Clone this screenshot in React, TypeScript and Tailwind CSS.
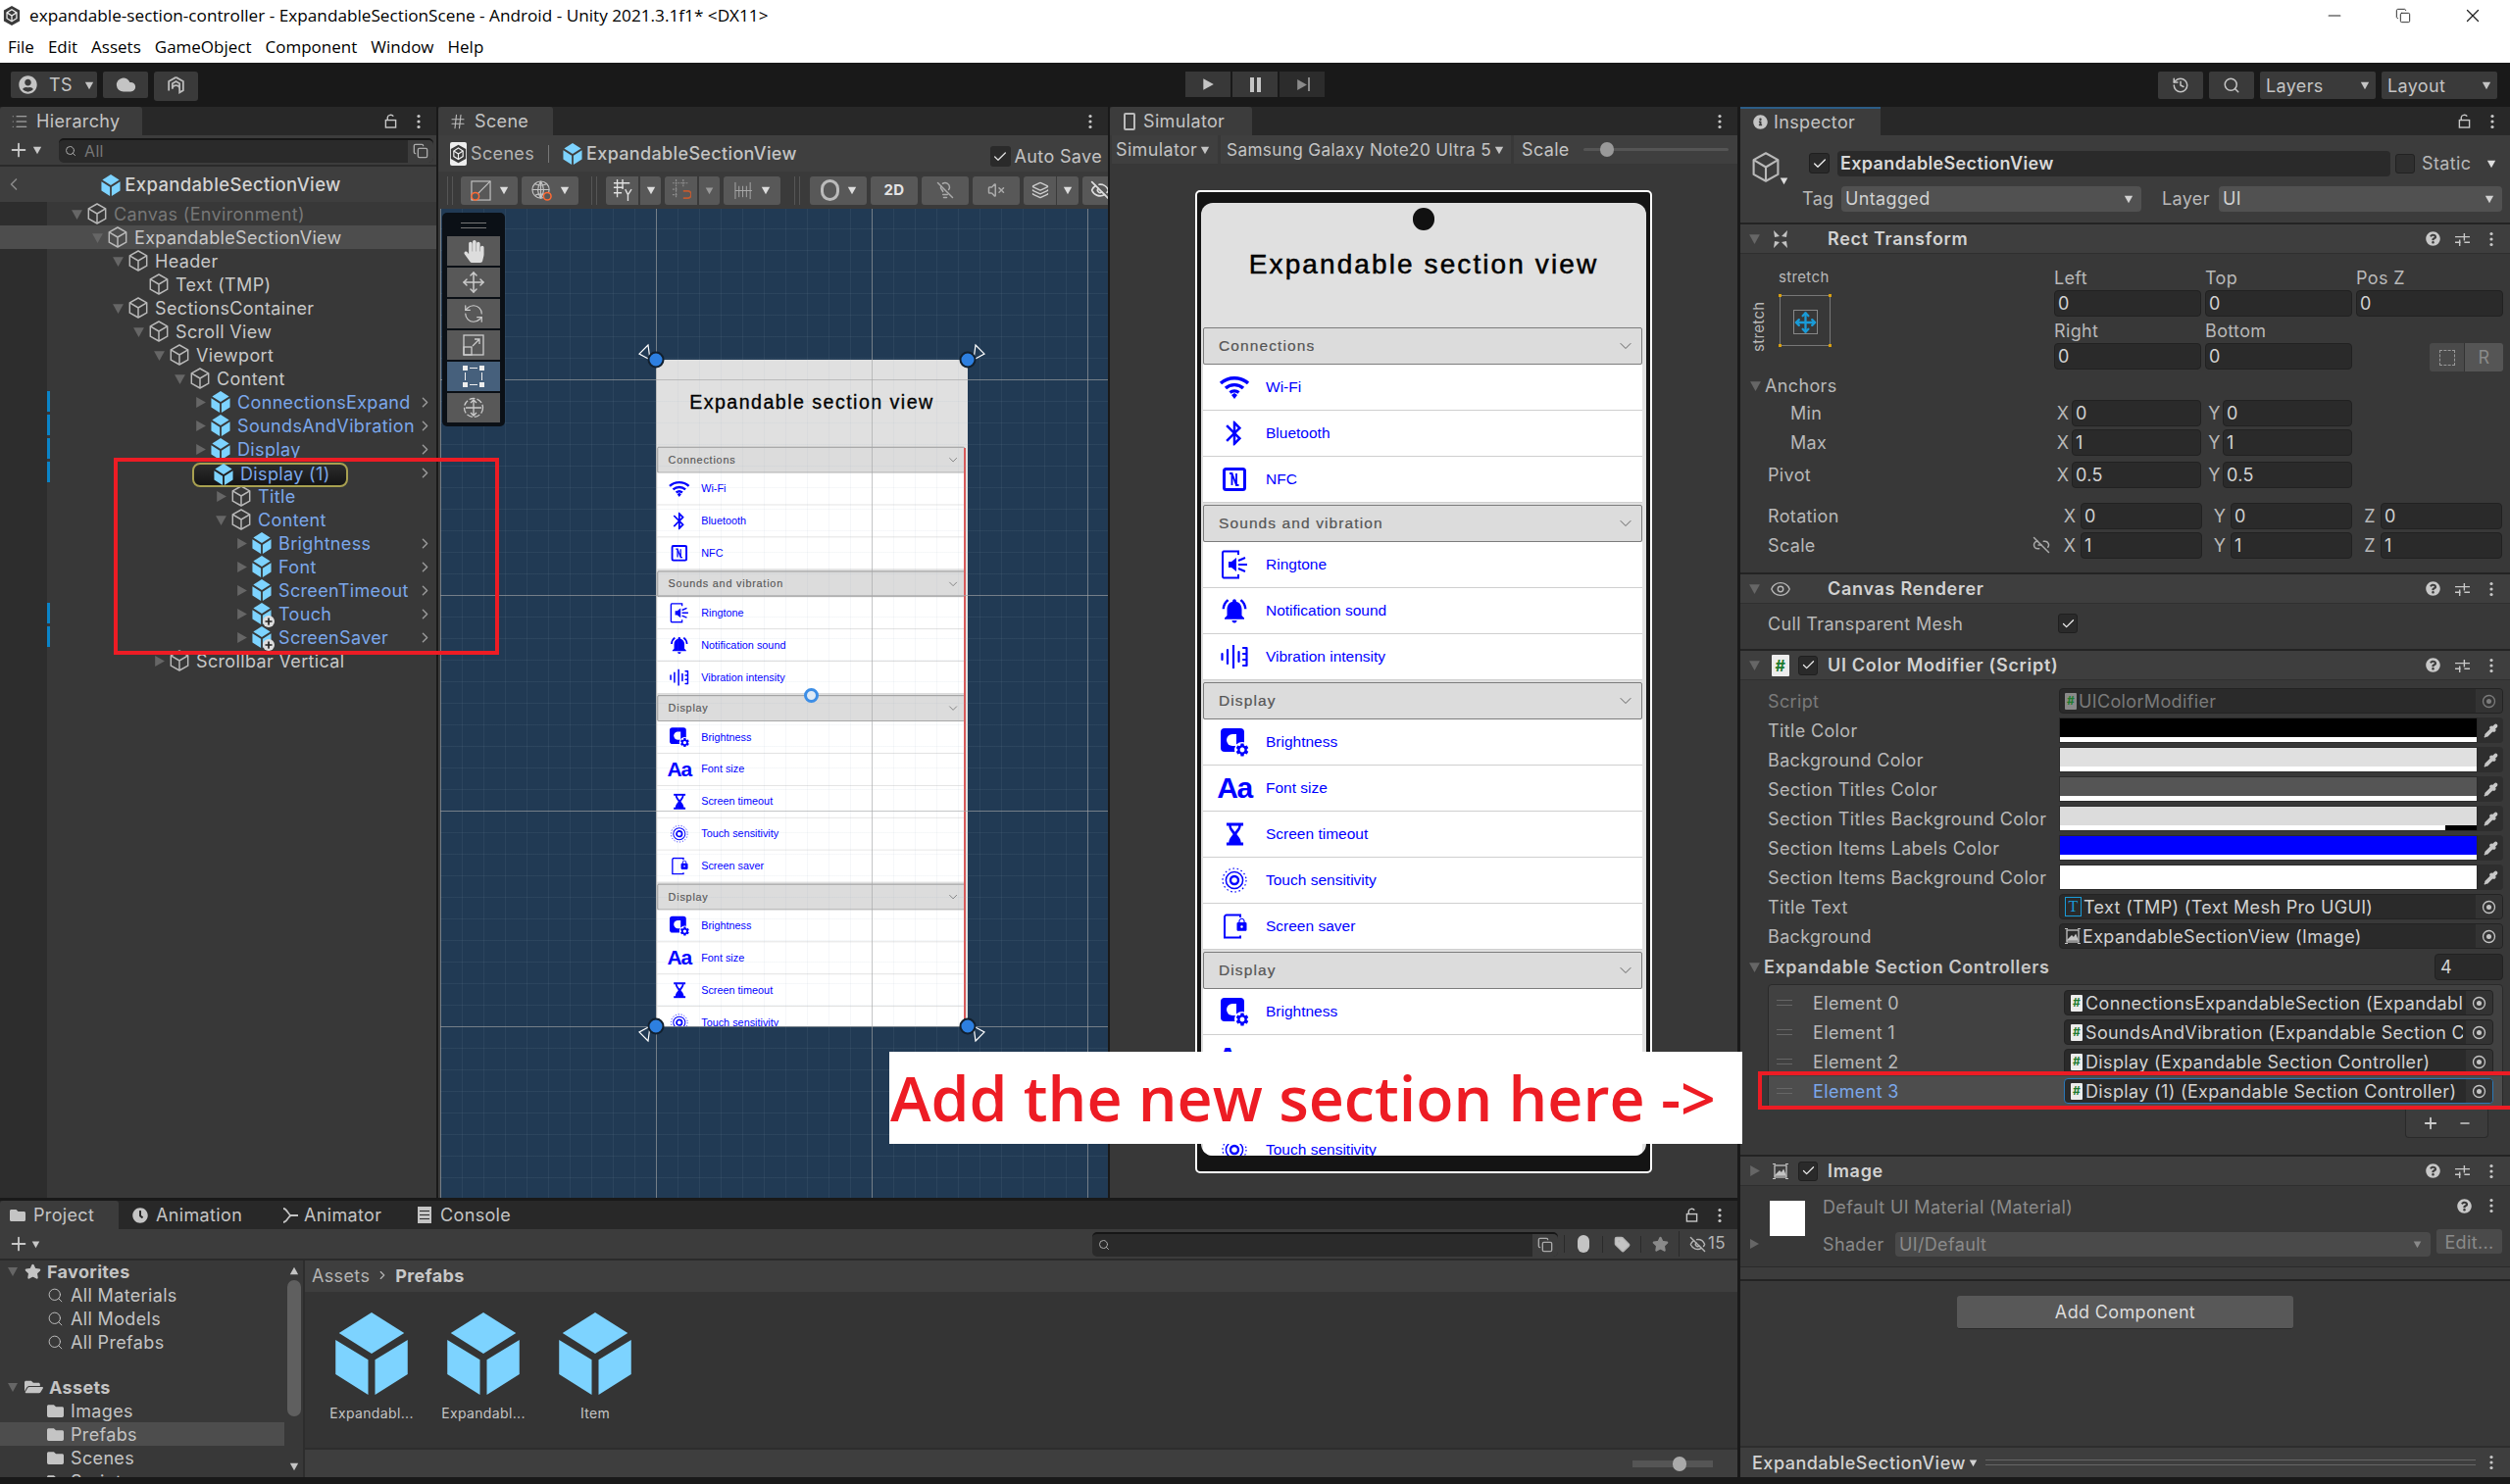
import React from "react";
import {
  Check, Cloud, Copy, EyeOff, History, LightbulbOff, List, Minus, Move, Pipette, Plus, RefreshCcw, Search, Star, Tag, VolumeX, X, Eye, Layers, ChevronRight, ChevronDown, Link2Off, Hash,
} from "lucide-react";
import { FaQuestionCircle, FaUserCircle, FaClock, FaFolder, FaFolderOpen, FaInfoCircle, FaHandPaper } from "react-icons/fa";
import { MdBluetooth, MdNotificationsActive, MdSettings, MdLock } from "react-icons/md";

const Tri = ({ dir = "down", className = "" }: { dir?: "down" | "right"; className?: string }) => (
  <svg viewBox="0 0 12 12" className={className} fill="currentColor">
    {dir === "down" ? <path d="M1 2h10L6 11z" /> : <path d="M2 1v10l9-5z" />}
  </svg>
);

const OutlineCube = ({ className = "w-5 h-[22px]" }: { className?: string }) => (
  <svg viewBox="0.5 0.5 23 25" className={"shrink-0 " + className} fill="none" stroke="#b9b9b9" strokeWidth="1.7" strokeLinejoin="round">
    <path d="M12 1.500 22 7v12l-10 5.500L2 19V7z" />
    <path d="m2 7 10 6 10-6M12 13v11.500" />
  </svg>
);

const PrefabCube = ({ className = "w-5 h-[22px]", badge = false }: { className?: string; badge?: boolean }) => (
  <span className={"relative inline-block shrink-0 " + className}>
    <svg viewBox="1 1 22 24" className="w-full h-full" fill="#7dd3ff">
      <path d="M12 1 21.500 7 12 13 2.500 7z" />
      <path d="M1.500 9 11 14.800V25L1.500 19zM22.500 9 13 14.800V25l9.500-6z" />
    </svg>
    {badge && (
      <span className="absolute -right-[3px] -bottom-[3px] w-3 h-3 rounded-full bg-[#ddd] flex items-center justify-center">
        <Plus className="w-[10px] h-[10px] text-[#222]" strokeWidth={4} />
      </span>
    )}
  </span>
);

const Kebab = ({ className = "" }: { className?: string }) => (
  <svg viewBox="0 0 4 16" className={"w-1 h-4 " + className} fill="#c8c8c8">
    <circle cx="2" cy="2.500" r="1.600" />
    <circle cx="2" cy="8" r="1.600" />
    <circle cx="2" cy="13.500" r="1.600" />
  </svg>
);

const LockIcon = () => (
  <svg viewBox="0 0 14 16" className="w-[13px] h-[15px]" fill="none" stroke="#c8c8c8" strokeWidth="1.500">
    <rect x="1.500" y="7" width="11" height="8" />
    <path d="M3.500 7V4a3.500 3 0 0 1 6.500-1.200" />
  </svg>
);

const PresetIcon = () => (
  <svg viewBox="0 0 16 16" className="w-[15px] h-[15px]" stroke="#c8c8c8" strokeWidth="1.500" fill="none">
    <path d="M0 6h16M10 2v8M0 12h6M10 12h6M5 9v7" />
  </svg>
);

const Target = ({ dim = false }: { dim?: boolean }) => (
  <svg viewBox="0 0 16 16" className={"w-[15px] h-[15px] " + (dim ? "opacity-50" : "")} fill="none" stroke="#c4c4c4" strokeWidth="1.400">
    <circle cx="8" cy="8" r="6.400" />
    <circle cx="8" cy="8" r="2" fill="#c4c4c4" />
  </svg>
);

const ScriptIcon = ({ dim = false }: { dim?: boolean }) => (
  <span className={"w-[12px] h-[17px] shrink-0 rounded-[1px] flex items-center justify-center text-[12px] leading-none font-bold text-[#1d7a2e] " + (dim ? "bg-[#8a8a8a]" : "bg-[#ececec]")}>
    #
  </span>
);

const ImageGlyph = () => (
  <svg viewBox="0 0 16 16" className="w-[16px] h-[16px] shrink-0" fill="none" stroke="#c4c4c4" strokeWidth="1.300">
    <rect x="2" y="2" width="12" height="12" />
    <path d="m3 12 4-4 2 2 2-3 2 5z" fill="#c4c4c4" />
    <path d="M0 0h3M13 0h3M0 16h3M13 16h3" strokeWidth="2" />
  </svg>
);

const UnityLogo = () => (
  <svg viewBox="0 0 20 22" className="w-[18px] h-[20px]">
    <path d="M10 0 19 5v12l-9 5-9-5V5z" fill="#3a3a3a" />
    <path d="M10 4 15.500 7.500V14L10 17.500 4.500 14V7.500z" fill="none" stroke="#eee" strokeWidth="1.400" />
    <path d="M4.500 7.500 10 11l5.500-3.500M10 11v6.500" fill="none" stroke="#eee" strokeWidth="1.400" />
  </svg>
);

/* ---------- phone preview ---------- */

const WifiGlyph = () => (
  <svg viewBox="0 0 32 24" className="w-[32px] h-[24px]" fill="none" stroke="#00f" strokeWidth="3.400">
    <path d="M2 8c8-7 20-7 28 0M7 13c5-4.500 13-4.500 18 0" />
    <path d="M11.500 17.500c2.500-2 6.500-2 9 0" />
    <path d="m13 20 3-2 3 2-3 4z" fill="#00f" stroke="none" />
  </svg>
);

const NfcGlyph = () => (
  <svg viewBox="0 0 24 24" className="w-[24px] h-[24px]" fill="none" stroke="#00f">
    <rect x="1.500" y="1.500" width="21" height="21" rx="2" strokeWidth="3" />
    <path d="M7 6h2.500v12M16.500 18H14V6M9.500 6 14 18" strokeWidth="1.800" />
  </svg>
);

const RingtoneGlyph = () => (
  <svg viewBox="0 0 28 30" className="w-[28px] h-[30px]" fill="none" stroke="#00f" strokeWidth="2">
    <path d="M18 5V1.500H3a1.500 1.500 0 0 0-1 1.500v24a1.500 1.500 0 0 0 1 1.500h15V25" />
    <path d="M8 12h3l5-4v14l-5-4H8z" fill="#00f" stroke="none" />
    <path d="m18 11 7-3M18 15h9M18 19l7 3" />
  </svg>
);

const VibrationGlyph = () => (
  <svg viewBox="0 0 28 24" className="w-[28px] h-[24px]" stroke="#00f" strokeWidth="2.200" strokeLinecap="round">
    <path d="M1.500 9v6M7 5v14M13 0v24M18.500 7v10M26.500 3v18M23 3h3.500M23 9h3.500M23 15h3.500M23 21h3.500" />
  </svg>
);

const BrightnessGlyph = () => (
  <span className="relative w-[28px] h-[28px] block">
    <span className="absolute left-0 top-0 w-[24px] h-[24px] rounded-[4px] bg-[#00f]" />
    <span className="absolute left-[6px] top-[6px] w-[10px] h-[12px] rounded-l-full bg-white" />
    <MdSettings className="absolute -right-[2px] -bottom-[2px] w-[16px] h-[16px] text-[#00f] bg-white rounded-full" />
  </span>
);

const HourglassGlyph = () => (
  <svg viewBox="0 0 20 24" className="w-[19px] h-[24px]" fill="#00f">
    <path d="M1 0h18v3h-2.500c0 4-3 6.500-4.500 9 1.500 2.500 4.500 5 4.500 9H19v3H1v-3h2.500c0-4 3-6.500 4.500-9-1.500-2.500-4.500-5-4.500-9H1z" />
    <path d="M6 3h8c0 2-2 4-4 6.500C8 7 6 5 6 3z" fill="#fff" />
  </svg>
);

const TouchGlyph = () => (
  <svg viewBox="0 0 26 26" className="w-[26px] h-[26px]" fill="none" stroke="#00f">
    <circle cx="13" cy="13" r="12" strokeWidth="1.200" strokeDasharray="1.600 2.600" />
    <circle cx="13" cy="13" r="8.600" strokeWidth="1.500" />
    <circle cx="13" cy="13" r="4" strokeWidth="2.400" />
  </svg>
);

const SaverGlyph = () => (
  <span className="relative w-[22px] h-[26px] block">
    <svg viewBox="0 0 22 26" className="w-full h-full" fill="none" stroke="#00f" strokeWidth="2">
      <path d="M17 4V1.500H3A2 2 0 0 0 1 3.500v21h16v-2" />
    </svg>
    <MdLock className="absolute right-[-4px] top-[4px] w-[15px] h-[15px] text-[#00f]" />
  </span>
);

const sections = [
  {
    title: "Connections",
    items: [
      { label: "Wi-Fi", icon: <WifiGlyph /> },
      { label: "Bluetooth", icon: <MdBluetooth className="w-[30px] h-[30px] text-[#00f]" /> },
      { label: "NFC", icon: <NfcGlyph /> },
    ],
  },
  {
    title: "Sounds and vibration",
    items: [
      { label: "Ringtone", icon: <RingtoneGlyph /> },
      { label: "Notification sound", icon: <MdNotificationsActive className="w-[30px] h-[30px] text-[#00f]" /> },
      { label: "Vibration intensity", icon: <VibrationGlyph /> },
    ],
  },
];

const displayItems = [
  { label: "Brightness", icon: <BrightnessGlyph /> },
  { label: "Font size", icon: <span className="text-[30px] leading-none font-bold text-[#00f] tracking-[-1.500px]">Aa</span> },
  { label: "Screen timeout", icon: <HourglassGlyph /> },
  { label: "Touch sensitivity", icon: <TouchGlyph /> },
  { label: "Screen saver", icon: <SaverGlyph /> },
];

const allSections = [...sections, { title: "Display", items: displayItems }, { title: "Display", items: displayItems }];

const PhoneContent = () => (
  <div className="w-[454px] h-[972px] bg-[#e0e0e0] overflow-hidden tracking-normal font-['Liberation_Sans',sans-serif]">
    <div className="h-[127px] flex items-center justify-center pb-[2px] text-[28px] tracking-[2.1px] text-black [-webkit-text-stroke:0.5px_black]">
      Expandable section view
    </div>
    <div className="pl-[2px] pr-[4px] flex flex-col gap-[2px]">
      {allSections.map((s, i) => (
        <div key={i}>
          <div className="h-[38px] bg-[#dcdcdc] border border-[#7c7c7c] rounded-[2px] flex items-center justify-between pl-[15px] pr-[6px]">
            <span className="text-[15.5px] tracking-[1.1px] text-[#555] [-webkit-text-stroke:0.2px_#555]">{s.title}</span>
            <ChevronDown className="w-[20px] h-[20px] text-[#555]" strokeWidth={1.1} />
          </div>
          {s.items.map((it) => (
            <div key={it.label} className="h-[47px] bg-white border-b border-[#cfcfcf] flex items-center">
              <span className="w-[64px] flex justify-center shrink-0">{it.icon}</span>
              <span className="text-[15.5px] text-[#00f]">{it.label}</span>
            </div>
          ))}
        </div>
      ))}
    </div>
  </div>
);

/* ---------- shared panel bits ---------- */

const TabBar = ({ icon, label, width, lock = true }: { icon: React.ReactNode; label: string; width: string; lock?: boolean }) => (
  <div className="h-[29px] bg-[#282828] flex items-center justify-between pr-[16px]">
    <div className={"h-full bg-[#3c3c3c] rounded-t-[3px] flex items-center gap-[8px] pl-[11px] " + width}>
      {icon}
      <span className="text-[18px]">{label}</span>
    </div>
    <div className="flex items-center gap-[20px]">
      {lock && <LockIcon />}
      <Kebab />
    </div>
  </div>
);

const ToolBtn = ({ className = "", children }: { className?: string; children: React.ReactNode }) => (
  <div className={"h-[29px] bg-[#585858] rounded-[3px] flex items-center justify-center gap-[8px] shrink-0 " + className}>{children}</div>
);

const Grip = ({ className = "" }: { className?: string }) => (
  <div className={"w-[6px] h-[29px] border-x border-[#555] shrink-0 " + className} />
);

/* ---------- hierarchy ---------- */

type Node = { name: string; depth: number; arrow?: "down" | "right"; kind?: "cube" | "prefab" | "added"; blue?: boolean; chev?: boolean; mark?: boolean; dim?: boolean; sel?: boolean };

const tree: Node[] = [
  { name: "Canvas (Environment)", depth: 0, arrow: "down", dim: true },
  { name: "ExpandableSectionView", depth: 1, arrow: "down", sel: true },
  { name: "Header", depth: 2, arrow: "down" },
  { name: "Text (TMP)", depth: 3 },
  { name: "SectionsContainer", depth: 2, arrow: "down" },
  { name: "Scroll View", depth: 3, arrow: "down" },
  { name: "Viewport", depth: 4, arrow: "down" },
  { name: "Content", depth: 5, arrow: "down" },
  { name: "ConnectionsExpand", depth: 6, arrow: "right", kind: "prefab", blue: true, chev: true, mark: true },
  { name: "SoundsAndVibration", depth: 6, arrow: "right", kind: "prefab", blue: true, chev: true, mark: true },
  { name: "Display", depth: 6, arrow: "right", kind: "prefab", blue: true, chev: true, mark: true },
  { name: "", depth: 6, kind: "cube", chev: true, mark: true },
  { name: "Title", depth: 7, arrow: "right", blue: true },
  { name: "Content", depth: 7, arrow: "down", blue: true },
  { name: "Brightness", depth: 8, arrow: "right", kind: "prefab", blue: true, chev: true },
  { name: "Font", depth: 8, arrow: "right", kind: "prefab", blue: true, chev: true },
  { name: "ScreenTimeout", depth: 8, arrow: "right", kind: "prefab", blue: true, chev: true },
  { name: "Touch", depth: 8, arrow: "right", kind: "added", blue: true, chev: true, mark: true },
  { name: "ScreenSaver", depth: 8, arrow: "right", kind: "added", blue: true, chev: true, mark: true },
  { name: "Scrollbar Vertical", depth: 4, arrow: "right" },
];

const TreeRow = ({ n }: { n: Node }) => (
  <div className={"relative h-6 flex items-center text-[18px] " + (n.sel ? "bg-[#4d4d4d]" : "")}>
    {n.mark && <span className="absolute left-[48px] top-[1px] w-[3px] h-[21px] bg-[#0a84c8]" />}
    {n.name && (
      <div className="flex items-center" style={{ marginLeft: 72 + 21 * n.depth }}>
        <span className="w-[13px] shrink-0 mr-[4px]">{n.arrow && <Tri dir={n.arrow} className="w-[13px] h-[13px] text-[#666]" />}</span>
        {n.kind === "prefab" || n.kind === "added" ? <PrefabCube badge={n.kind === "added"} /> : <OutlineCube />}
        <span className={"ml-[7px] whitespace-nowrap " + (n.dim ? "text-[#777]" : n.blue ? "text-[#7ba7ea]" : "text-[#c8c8c8]")}>{n.name}</span>
      </div>
    )}
    {n.chev && <ChevronRight className="absolute left-[425px] top-[4px] w-[17px] h-[17px] text-[#9a9a9a]" strokeWidth={2} />}
  </div>
);

const Hierarchy = () => (
  <section className="w-[445px] shrink-0 bg-[#383838] flex flex-col">
    <TabBar width="w-[145px]" label="Hierarchy" icon={<List className="w-[18px] h-[18px] text-[#bbb]" strokeWidth={1.5} />} />
    <div className="h-[32px] bg-[#3c3c3c] border-b-2 border-[#2a2a2a] flex items-center pr-[3px]">
      <Plus className="w-[22px] h-[22px] ml-[8px] text-[#c8c8c8]" strokeWidth={2} />
      <Tri className="w-[10px] h-[10px] ml-[3px] text-[#c8c8c8]" />
      <div className="ml-[17px] flex-1 h-[25px] bg-[#2a2a2a] border-t-2 border-[#161616] rounded-[5px] flex items-center pl-[6px] gap-[8px]">
        <Search className="w-[12px] h-[12px] text-[#aaa]" />
        <span className="text-[16px] text-[#777]">All</span>
        <span className="ml-auto w-[26px] h-full bg-[#3c3c3c] flex items-center justify-center rounded-r-[5px]">
          <Copy className="w-[16px] h-[16px] text-[#aaa]" />
        </span>
      </div>
    </div>
    <div className="h-[36px] bg-[#3e3e3e] relative flex items-center justify-center pl-[6px] pt-[2px] gap-[4px] text-[18.5px] font-medium text-[#d2d2d2]">
      <ChevronRight className="absolute left-[4px] top-[8px] w-[20px] h-[20px] rotate-180 text-[#888]" />
      <PrefabCube />
      ExpandableSectionView
    </div>
    <div className="relative flex-1">
      <div className="absolute left-0 top-0 bottom-0 w-[48px] bg-[#2d2d2d]" />
      <div className="relative">
        {tree.map((n, i) => (
          <TreeRow key={i} n={n} />
        ))}
      </div>
      {/* ping highlight round Display (1) */}
      <div className="absolute left-[196px] top-[266px] w-[159px] h-[25px] rounded-[8px] border-2 border-[#a8a050] bg-gradient-to-b from-[#2c2c2c] to-[#151515] flex items-center pl-[20px] pb-[2px] gap-[7px] text-[18px] text-[#7ba7ea] whitespace-nowrap">
        <PrefabCube />
        Display (1)
      </div>
    </div>
  </section>
);

/* ---------- scene ---------- */

const Handle = ({ className, flip = false }: { className: string; flip?: boolean }) => (
  <svg viewBox="0 0 40 40" className={"absolute w-[40px] h-[40px] " + className} style={flip ? { transform: "scaleX(-1)" } : undefined}>
    <path d="M12 5 3 14l11 6z" fill="none" stroke="#fff" strokeWidth="1.200" />
    <circle cx="20" cy="20" r="7.500" fill="#2d7fe0" stroke="#12202e" strokeWidth="2" />
  </svg>
);

const SideTool = ({ active = false, children }: { active?: boolean; children: React.ReactNode }) => (
  <div className={"h-[30px] w-[54px] flex items-center justify-center " + (active ? "bg-[#46607c]" : "bg-[#585858]")}>{children}</div>
);

const Scene = () => (
  <section className="w-[683px] shrink-0 flex flex-col bg-[#3c3c3c]">
    <TabBar width="w-[117px]" label="Scene" lock={false} icon={<Hash className="w-[18px] h-[18px] text-[#bbb]" strokeWidth={1.5} />} />
    <div className="h-[37px] bg-[#3f3f3f] flex items-center pl-[12px] pr-[6px] text-[18px] text-[#c4c4c4]">
      <span className="w-[17px] h-[24px] bg-[#eee] rounded-[2px] flex items-center justify-center mr-[4px]"><UnityLogo /></span>
      <span className="text-[#b4b4b4]">Scenes</span>
      <span className="w-px h-[18px] bg-[#777] mx-[14px]" />
      <PrefabCube />
      <span className="ml-[4px] font-medium">ExpandableSectionView</span>
      <span className="ml-auto w-[21px] h-[21px] bg-[#2a2a2a] rounded-[3px] flex items-center justify-center mt-[6px]">
        <Check className="w-[16px] h-[16px] text-[#ddd]" />
      </span>
      <span className="ml-[4px] mt-[6px] text-[18px]">Auto Save</span>
    </div>
    <div className="h-[38px] bg-[#3a3a3a] flex items-center pl-[9px] overflow-hidden">
      <Grip />
      <ToolBtn className="w-[58px] ml-[8px]">
        <svg viewBox="0 0 22 22" className="w-[21px] h-[21px]" fill="none" stroke="#c4c4c4" strokeWidth="1.200"><rect x="1" y="1" width="20" height="20" /><path d="M1 21 21 1" /><circle cx="5" cy="17" r="4" stroke="#ff6a33" strokeWidth="1.600" fill="#585858" /></svg>
        <Tri className="w-[10px] h-[10px] text-[#ddd]" />
      </ToolBtn>
      <ToolBtn className="w-[58px] ml-[4px]">
        <svg viewBox="0 0 22 22" className="w-[21px] h-[21px]" fill="none" stroke="#c4c4c4" strokeWidth="1.200"><circle cx="10" cy="10" r="9" /><path d="M1 10h18M10 1v18M4 4q6 3 12 0M4 16q6-3 12 0M10 1q-6 9 0 18M10 1q6 9 0 18" /><circle cx="17" cy="17" r="4" stroke="#ff6a33" strokeWidth="1.600" fill="#585858" /></svg>
        <Tri className="w-[10px] h-[10px] text-[#ddd]" />
      </ToolBtn>
      <Grip className="ml-[13px]" />
      <ToolBtn className="w-[33px] ml-[9px] bg-[#46607c] rounded-r-none">
        <svg viewBox="0 0 22 26" className="w-[20px] h-[24px]" fill="none" stroke="#e0e0e0" strokeWidth="1.500"><path d="M5 1v20M11 1v11M1 5h18M1 10h11M1 16h9M14 12l3 6 4-6M17 18v7" /></svg>
      </ToolBtn>
      <ToolBtn className="w-[21px] ml-[2px] bg-[#46607c] rounded-l-none"><Tri className="w-[10px] h-[10px] text-[#ddd]" /></ToolBtn>
      <ToolBtn className="w-[33px] ml-[4px] rounded-r-none">
        <svg viewBox="0 0 22 26" className="w-[20px] h-[24px]" fill="none" stroke="#8f8f8f" strokeWidth="1.300"><path d="M5 1v20M13 1v8M1 5h18M1 12h6M1 18h6" strokeDasharray="2 1" /><path d="M13 14h5a3.500 3.500 0 0 1 0 8h-5" stroke="#c05a30" strokeWidth="2" /></svg>
      </ToolBtn>
      <ToolBtn className="w-[21px] ml-[2px] rounded-l-none"><Tri className="w-[9px] h-[9px] text-[#999]" /></ToolBtn>
      <ToolBtn className="w-[58px] ml-[4px]">
        <svg viewBox="0 0 20 20" className="w-[19px] h-[19px]" stroke="#aaa" strokeWidth="1"><path d="M1 1v18M5 5v12M9 5v12M13 5v12M17 1v18M1 10h18" /></svg>
        <Tri className="w-[10px] h-[10px] text-[#ddd]" />
      </ToolBtn>
      <Grip className="ml-[14px]" />
      <ToolBtn className="w-[58px] ml-[10px]"><span className="w-[19px] h-[22px] rounded-full border-[3px] border-[#bbb]" /><Tri className="w-[10px] h-[10px] text-[#ddd]" /></ToolBtn>
      <ToolBtn className="w-[48px] ml-[4px] bg-[#46607c]"><span className="text-[15px] font-bold text-[#e4e4e4]">2D</span></ToolBtn>
      <ToolBtn className="w-[48px] ml-[4px]"><LightbulbOff className="w-[18px] h-[18px] text-[#aaa]" /></ToolBtn>
      <ToolBtn className="w-[48px] ml-[4px]"><VolumeX className="w-[18px] h-[18px] text-[#aaa]" /></ToolBtn>
      <ToolBtn className="w-[33px] ml-[4px] rounded-r-none"><Layers className="w-[18px] h-[18px] text-[#ccc]" /></ToolBtn>
      <ToolBtn className="w-[22px] ml-[1px] rounded-l-none"><Tri className="w-[10px] h-[10px] text-[#ddd]" /></ToolBtn>
      <ToolBtn className="w-[40px] ml-[4px] bg-[#46607c] rounded-r-none justify-start pl-[8px]"><EyeOff className="w-[20px] h-[20px] shrink-0 text-[#ddd]" /></ToolBtn>
    </div>
    <div className="relative flex-1 ml-[2px] overflow-hidden bg-[#213a54]">
      {/* the canvas sits on the free scene view */}
      <div className="absolute left-[220px] top-[154px] w-[318px] h-[680px] overflow-hidden bg-[#e0e0e0]">
        <div className="origin-top-left scale-[0.7]">
          <PhoneContent />
        </div>
        <div className="absolute right-[2px] top-[90px] bottom-0 w-[2px] bg-[#d75a5a]" />
      </div>
      <div className="absolute inset-0 pointer-events-none bg-[linear-gradient(to_right,rgba(165,165,165,0.6)_1px,transparent_1px),linear-gradient(to_bottom,rgba(165,165,165,0.6)_1px,transparent_1px),linear-gradient(to_right,rgba(150,170,190,0.09)_1px,transparent_1px),linear-gradient(to_bottom,rgba(150,170,190,0.09)_1px,transparent_1px)] bg-[size:220px_220px,220px_220px,22px_22px,22px_22px] bg-[position:0px_174px,0px_174px,0px_174px,0px_174px]" />
      <Handle className="left-[200px] top-[134px]" />
      <Handle className="left-[518px] top-[134px]" flip />
      <Handle className="left-[200px] top-[814px] -scale-y-100" />
      <Handle className="left-[518px] top-[814px] -scale-y-100" flip />
      <div className="absolute left-[371px] top-[489px] w-[15px] h-[15px] rounded-full border-[3px] border-[#3d8ee6] bg-[#dfeaf5]" />
      <div className="absolute left-[2px] top-[4px] w-[64px] h-[218px] bg-[#0b1016] rounded-[5px] flex flex-col items-center pt-[24px] gap-[2px]">
        <div className="absolute top-[10px] w-[26px] h-[6px] border-y border-[#777]" />
        <SideTool><FaHandPaper className="w-[21px] h-[23px] text-[#ddd]" /></SideTool>
        <SideTool><Move className="w-[24px] h-[24px] text-[#ccc]" strokeWidth={1.5} /></SideTool>
        <SideTool><RefreshCcw className="w-[22px] h-[22px] text-[#ccc]" strokeWidth={1.3} /></SideTool>
        <SideTool><svg viewBox="0 0 22 22" className="w-[22px] h-[22px]" fill="none" stroke="#ccc" strokeWidth="1.300"><rect x="1" y="1" width="20" height="20" /><rect x="1" y="13" width="8" height="8" /><path d="m10 12 7-7M12 5h5v5" /></svg></SideTool>
        <SideTool active><svg viewBox="0 0 22 22" className="w-[22px] h-[22px]" fill="#eee"><path d="M0 0h5v5H0zM17 0h5v5h-5zM0 17h5v5H0zM17 17h5v5h-5z" /><path d="M7 2h8v1H7zM7 19h8v1H7zM2 7h1v8H2zM19 7h1v8h-1z" /></svg></SideTool>
        <SideTool><svg viewBox="0 0 24 24" className="w-[24px] h-[24px]" fill="none" stroke="#ccc" strokeWidth="1.300"><circle cx="12" cy="12" r="9.500" strokeDasharray="6 2" /><path d="M4 12h16M12 4v16M9 7l3-3 3 3M9 17l3 3 3-3" /></svg></SideTool>
      </div>
    </div>
  </section>
);

/* ---------- simulator ---------- */

const Simulator = () => (
  <section className="w-[640px] shrink-0 flex flex-col bg-[#383838]">
    <TabBar width="w-[145px]" label="Simulator" lock={false} icon={<span className="w-[12px] h-[18px] border-2 border-[#bbb] rounded-[2px] ml-[3px]" />} />
    <div className="h-[29px] flex items-stretch gap-[3px] pl-[2px] text-[18px] text-[#c4c4c4]">
      <div className="w-[108px] bg-[#3f3f3f] flex items-center pl-[4px] gap-[3px]">Simulator<Tri className="w-[10px] h-[10px]" /></div>
      <div className="w-[296px] bg-[#3f3f3f] flex items-center pl-[6px] gap-[3px] whitespace-nowrap text-[17.2px]">Samsung Galaxy Note20 Ultra 5<Tri className="w-[10px] h-[10px]" /></div>
      <div className="flex-1 bg-[#3f3f3f] flex items-center pl-[8px]">
        Scale
        <div className="relative ml-[14px] w-[148px] h-[3px] bg-[#555] rounded">
          <span className="absolute left-[17px] -top-[6px] w-[14px] h-[15px] rounded-full bg-[#999]" />
        </div>
      </div>
    </div>
    <div className="flex-1 relative pl-[87px] pt-[27px]">
      <div className="w-[466px] h-[1003px] bg-[#141414] border-2 border-white rounded-[5px] pl-[4px] pt-[11px]">
        <div className="w-[454px] h-[972px] rounded-[12px] overflow-hidden relative">
          <PhoneContent />
          <span className="absolute left-[216px] top-[5px] w-[22px] h-[23px] rounded-full bg-[#111]" />
        </div>
      </div>
    </div>
  </section>
);

/* ---------- project ---------- */

const ProjRow = ({ children, sel = false }: { children: React.ReactNode; sel?: boolean }) => (
  <div className={"h-6 flex items-center pl-[48px] gap-[7px] text-[18px] text-[#c4c4c4] " + (sel ? "bg-[#4d4d4d]" : "")}>{children}</div>
);

const Project = () => (
  <section className="h-[282px] mt-[3px] flex flex-col bg-[#383838] overflow-hidden">
    <div className="h-[29px] bg-[#282828] flex items-center pr-[16px] text-[18px] text-[#c4c4c4]">
      <div className="w-[121px] h-full bg-[#3c3c3c] rounded-t-[3px] flex items-center pl-[10px] gap-[8px]"><FaFolder className="w-[16px] h-[16px] text-[#c4c4c4]" />Project</div>
      <div className="ml-[14px] w-[152px] flex items-center gap-[8px]"><FaClock className="w-[16px] h-[16px]" />Animation</div>
      <div className="w-[139px] flex items-center gap-[5px]">
        <svg viewBox="0 0 18 18" className="w-[18px] h-[18px]" fill="none" stroke="#c4c4c4" strokeWidth="1.800"><path d="M2 2c4 0 5 7 8 7h7M2 16c4 0 5-7 8-7" /></svg>
        Animator
      </div>
      <div className="flex items-center gap-[9px]">
        <span className="w-[14px] h-[17px] bg-[#c4c4c4] flex flex-col justify-around px-[2px] py-[2px]"><i className="h-px bg-[#282828]" /><i className="h-px bg-[#282828]" /><i className="h-px bg-[#282828]" /></span>
        Console
      </div>
      <div className="ml-auto flex items-center gap-[20px]"><LockIcon /><Kebab /></div>
    </div>
    <div className="h-[32px] bg-[#3c3c3c] border-b-2 border-[#2a2a2a] flex items-center">
      <Plus className="w-[22px] h-[22px] ml-[8px] text-[#c8c8c8]" strokeWidth={2} />
      <Tri className="w-[9px] h-[9px] ml-[2px] text-[#c8c8c8]" />
      <div className="ml-[1073px] w-[475px] h-[25px] bg-[#2a2a2a] border-t-2 border-[#161616] rounded-[5px] flex items-center pl-[6px]">
        <Search className="w-[12px] h-[12px] text-[#aaa]" />
        <span className="ml-auto w-[26px] h-full bg-[#3c3c3c] flex items-center justify-center rounded-r-[5px]"><Copy className="w-[16px] h-[16px] text-[#aaa]" /></span>
      </div>
      <div className="ml-[6px] flex items-center h-full text-[#b4b4b4]">
        <span className="w-[39px] flex justify-center border-l border-[#2a2a2a]"><span className="w-[12px] h-[18px] bg-[#c4c4c4] rounded-[6px]" /></span>
        <span className="w-[39px] flex justify-center border-l border-[#2a2a2a]"><Tag className="w-[17px] h-[17px]" fill="#c4c4c4" /></span>
        <span className="w-[39px] flex justify-center border-l border-[#2a2a2a]"><Star className="w-[17px] h-[17px] text-[#8a8a8a]" fill="#8a8a8a" /></span>
        <span className="w-[58px] flex items-center justify-center gap-[2px] border-l border-[#2a2a2a] text-[17px]"><EyeOff className="w-[17px] h-[17px]" />15</span>
      </div>
    </div>
    <div className="flex-1 flex min-h-0">
      <div className="w-[290px] shrink-0 overflow-hidden">
        <div className="h-6 -mt-[1px] flex items-center pl-[7px] gap-[6px] text-[18px] font-bold text-[#c4c4c4]"><Tri className="w-[12px] h-[12px] text-[#666]" /><Star className="w-[17px] h-[17px]" fill="#c4c4c4" />Favorites</div>
        {["All Materials", "All Models", "All Prefabs"].map((t) => (
          <ProjRow key={t}><Search className="w-[17px] h-[17px] text-[#c4c4c4]" strokeWidth={1.3} />{t}</ProjRow>
        ))}
        <div className="h-6 mt-[22px] flex items-center pl-[7px] gap-[6px] text-[18px] font-bold text-[#c4c4c4]"><Tri className="w-[12px] h-[12px] text-[#666]" /><FaFolderOpen className="w-[19px] h-[18px]" />Assets</div>
        <ProjRow><FaFolder className="w-[17px] h-[17px]" />Images</ProjRow>
        <ProjRow sel><FaFolder className="w-[17px] h-[17px]" />Prefabs</ProjRow>
        <ProjRow><FaFolder className="w-[17px] h-[17px]" />Scenes</ProjRow>
        <ProjRow><FaFolder className="w-[17px] h-[17px]" />Scripts</ProjRow>
      </div>
      <div className="w-[21px] shrink-0 border-r-2 border-[#2d2d2d] flex flex-col items-center pt-[6px] h-full relative">
        <Tri className="w-[10px] h-[10px] rotate-180 text-[#c4c4c4]" />
        <span className="mt-[4px] w-[14px] h-[139px] rounded-[7px] bg-[#5f5f5f]" />
        <Tri className="absolute bottom-[6px] w-[10px] h-[10px] text-[#c4c4c4]" />
      </div>
      <div className="flex-1 flex flex-col">
        <div className="h-[32px] bg-[#3e3e3e] flex items-center pl-[7px] pb-[2px] gap-[6px] text-[18px] text-[#b4b4b4]">
          Assets<ChevronRight className="w-[14px] h-[14px]" /><span className="font-bold text-[#c8c8c8]">Prefabs</span>
        </div>
        <div className="flex-1 flex gap-[30px] pl-[26px] pt-[21px] bg-[#343434] text-[14px] text-[#c4c4c4]">
          {["Expandabl...", "Expandabl...", "Item"].map((t, i) => (
            <div key={i} className="w-[84px] flex flex-col items-center">
              <PrefabCube className="w-[78px] h-[84px]" />
              <span className="mt-[8px]">{t}</span>
            </div>
          ))}
        </div>
        <div className="h-[30px] bg-[#3e3e3e] border-t-2 border-[#2d2d2d] flex items-center justify-end pr-[25px]">
          <div className="relative w-[82px] h-[7px] bg-[#555]"><span className="absolute left-[41px] -top-[4px] w-[14px] h-[15px] rounded-full bg-[#aaa]" /></div>
        </div>
      </div>
    </div>
  </section>
);

/* ---------- inspector ---------- */

const Field = ({ v, className = "" }: { v?: string; className?: string }) => (
  <div className={"h-[27px] bg-[#2a2a2a] border border-[#212121] rounded-[4px] flex items-center pl-[3px] text-[18px] text-[#d2d2d2] " + className}>{v}</div>
);

const Axis = ({ l, v, fw, lw }: { l: string; v: string; fw: string; lw: string }) => (
  <div className="flex items-center text-[18px] text-[#b8b8b8]">
    <span className={"text-center " + lw}>{l}</span>
    <Field v={v} className={fw} />
  </div>
);

const CompHeader = ({ title, icon, check = false, open = true }: { title: string; icon: React.ReactNode; check?: boolean; open?: boolean }) => (
  <div className="h-[32px] bg-[#3e3e3e] border-t-2 border-[#232323] border-b border-b-[#2f2f2f] flex items-center pl-[8px] pr-[17px] text-[18px] tracking-[0.7px] font-semibold text-[#d2d2d2]">
    <Tri dir={open ? "down" : "right"} className="w-[13px] h-[13px] text-[#666] shrink-0" />
    <span className="w-[22px] ml-[9px] flex justify-center shrink-0">{icon}</span>
    {check ? (
      <span className="w-[20px] h-[20px] ml-[7px] mr-[10px] bg-[#2a2a2a] border border-[#1f1f1f] rounded-[3px] flex items-center justify-center"><Check className="w-[15px] h-[15px] text-[#eee]" /></span>
    ) : (
      <span className="w-[37px]" />
    )}
    {title}
    <span className="ml-auto flex items-center">
      <FaQuestionCircle className="w-[15px] h-[15px] text-[#c8c8c8] mr-[15px]" />
      <PresetIcon />
      <Kebab className="ml-[20px]" />
    </span>
  </div>
);

const PropRow = ({ label, dim = false, children }: { label: string; dim?: boolean; children: React.ReactNode }) => (
  <div className="h-[30px] flex items-center pl-[28px] pr-[7px] text-[18px]">
    <span className={"w-[297px] shrink-0 whitespace-nowrap " + (dim ? "text-[#7a7a7a]" : "text-[#b8b8b8]")}>{label}</span>
    {children}
  </div>
);

const Swatch = ({ color, tick = false, bar = true }: { color: string; tick?: boolean; bar?: boolean }) => (
  <div className="flex-1 flex h-[26px]">
    <div className="flex-1 flex flex-col border border-[#2a2a2a]">
      <div className={"flex-1 " + color} />
      {bar && <div className="h-[5px] bg-white flex justify-end">{tick && <span className="w-[32px] bg-black" />}</div>}
    </div>
    <div className="w-[26px] bg-[#2e2e2e] rounded-r-[4px] flex items-center justify-center">
      <Pipette className="w-[15px] h-[15px] text-[#c8c8c8]" fill="#c8c8c8" />
    </div>
  </div>
);

const ObjField = ({ icon, text, dim = false }: { icon: React.ReactNode; text: string; dim?: boolean }) => (
  <div className={"flex-1 min-w-0 h-[26px] bg-[#2a2a2a] border border-[#232323] rounded-[4px] flex items-center pl-[5px] gap-[2px] overflow-hidden " + (dim ? "text-[#7a7a7a]" : "text-[#d2d2d2]")}>
    {icon}
    <span className="flex-1 min-w-0 overflow-hidden whitespace-nowrap">{text}</span>
    <span className="w-[27px] h-full shrink-0 bg-[#333] flex items-center justify-center"><Target dim={dim} /></span>
  </div>
);

const ElementRow = ({ label, text, active = false }: { label: string; text: string; active?: boolean }) => (
  <div className={"h-[30px] flex items-center pr-[9px] text-[18px] " + (active ? "bg-[#4d4d4d]" : "")}>
    <span className="ml-[8px] w-[16px] h-[6px] border-y border-[#666] shrink-0" />
    <span className={"ml-[21px] w-[256px] shrink-0 " + (active ? "text-[#7ba7ea]" : "text-[#b8b8b8]")}>{label}</span>
    <div className={"flex-1 min-w-0 h-[26px] bg-[#2a2a2a] rounded-[4px] flex items-center pl-[6px] gap-[3px] overflow-hidden text-[#d2d2d2] border " + (active ? "border-[#2a78b8]" : "border-[#232323]")}>
      <ScriptIcon />
      <span className="flex-1 min-w-0 overflow-hidden whitespace-nowrap">{text}</span>
      <span className="w-[27px] h-full shrink-0 bg-[#333] flex items-center justify-center"><Target /></span>
    </div>
  </div>
);

const Inspector = () => (
  <section className="w-[785px] shrink-0 ml-[3px] h-[1398px] bg-[#383838] flex flex-col">
    <div className="h-[29px] bg-[#282828] flex items-center justify-between pr-[16px]">
      <div className="w-[143px] h-full bg-[#3c3c3c] border-t-2 border-[#2c5d87] flex items-center pl-[13px] gap-[6px] text-[18px] text-[#c4c4c4]">
        <FaInfoCircle className="w-[15px] h-[15px]" />Inspector
      </div>
      <div className="flex items-center gap-[20px]"><LockIcon /><Kebab /></div>
    </div>
    <div className="h-[89px] bg-[#3c3c3c] relative text-[18px]">
      <OutlineCube className="absolute left-[11px] top-[17px] w-[30px] h-[31px]" />
      <Tri className="absolute left-[40px] top-[42px] w-[9px] h-[9px] text-[#ddd]" />
      <div className="pl-[70px] pt-[15px] flex items-center pr-[14px]">
        <span className="w-[21px] h-[21px] bg-[#2a2a2a] border border-[#1f1f1f] rounded-[3px] flex items-center justify-center"><Check className="w-[16px] h-[16px] text-[#eee]" /></span>
        <div className="ml-[8px] w-[564px] h-[26px] bg-[#2a2a2a] rounded-[4px] flex items-center pl-[3px] font-semibold text-[#d8d8d8]">ExpandableSectionView</div>
        <span className="ml-[5px] w-[20px] h-[20px] bg-[#2f2f2f] border border-[#222] rounded-[3px]" />
        <span className="ml-[7px] text-[#b8b8b8]">Static</span>
        <Tri className="ml-auto w-[10px] h-[10px] text-[#ddd]" />
      </div>
      <div className="pl-[63px] pt-[9px] flex items-center pr-[8px] text-[#b8b8b8]">
        <span className="w-[40px]">Tag</span>
        <div className="w-[306px] h-[26px] bg-[#515151] rounded-[4px] flex items-center justify-between px-[4px] pr-[8px] text-[#d2d2d2]">Untagged<Tri className="w-[10px] h-[10px]" /></div>
        <span className="ml-[21px] w-[58px]">Layer</span>
        <div className="flex-1 h-[26px] bg-[#515151] rounded-[4px] flex items-center justify-between px-[4px] pr-[8px] text-[#d2d2d2]">UI<Tri className="w-[10px] h-[10px]" /></div>
      </div>
    </div>

    <CompHeader title="Rect Transform" icon={<svg viewBox="0 0 18 18" className="w-[18px] h-[18px]" fill="#c4c4c4"><path d="M2 0 8 6 3 7zM16 0l-6 6 5 1zM2 18l6-6-5-1zM16 18l-6-6 5-1z" /></svg>} />
    <div className="h-[325px] text-[18px] text-[#b8b8b8] relative">
      <div className="flex pt-[13px]">
        <div className="w-[320px] shrink-0 relative h-[106px]">
          <span className="absolute left-[39px] top-0 text-[15px]">stretch</span>
          <span className="absolute left-[-11px] top-[50px] w-[60px] text-center text-[15px] -rotate-90">stretch</span>
          <div className="absolute left-[40px] top-[29px] w-[52px] h-[52px] border border-[#777]">
            <div className="absolute left-[13px] top-[14px] w-[25px] h-[25px] border border-[#888] flex items-center justify-center text-[#1a9bd7]">
              <Move className="w-[24px] h-[24px]" strokeWidth={2.4} />
            </div>
            <span className="absolute -left-[2px] -top-[2px] w-[3px] h-[3px] bg-[#d8a010]" />
            <span className="absolute -right-[2px] -top-[2px] w-[3px] h-[3px] bg-[#d8a010]" />
            <span className="absolute -left-[2px] -bottom-[2px] w-[3px] h-[3px] bg-[#d8a010]" />
            <span className="absolute -right-[2px] -bottom-[2px] w-[3px] h-[3px] bg-[#d8a010]" />
          </div>
        </div>
        <div className="w-[458px] grid grid-cols-3 gap-x-[4px] leading-[24px]">
          <span>Left</span><span>Top</span><span>Pos Z</span>
          <Field v="0" /><Field v="0" /><Field v="0" />
          <span className="mt-[3px]">Right</span><span className="mt-[3px]">Bottom</span><span />
          <Field v="0" /><Field v="0" />
          <div className="flex justify-end">
            <span className="w-[36px] h-[29px] bg-[#4a4a4a] rounded-l-[3px] border-r border-[#333] flex items-center justify-center"><span className="w-[16px] h-[16px] border border-dashed border-[#999]" /></span>
            <span className="w-[39px] h-[29px] bg-[#555] rounded-r-[3px] flex items-center justify-center text-[#8a8a8a]">R</span>
          </div>
        </div>
      </div>
      <div className="mt-[2px] flex items-center pl-[9px] h-[24px]"><Tri className="w-[13px] h-[13px] text-[#666] mr-[3px]" />Anchors</div>
      <div className="mt-[1px] flex items-center h-[30px] pl-[51px]">
        <span className="w-[269px]">Min</span>
        <Axis l="X" v="0" lw="w-[18px]" fw="w-[132px]" /><div className="w-[5px]" /><Axis l="Y" v="0" lw="w-[17px]" fw="w-[132px]" />
      </div>
      <div className="flex items-center h-[30px] pl-[51px]">
        <span className="w-[269px]">Max</span>
        <Axis l="X" v="1" lw="w-[18px]" fw="w-[132px]" /><div className="w-[5px]" /><Axis l="Y" v="1" lw="w-[17px]" fw="w-[132px]" />
      </div>
      <div className="flex items-center h-[30px] pl-[28px] mt-[3px]">
        <span className="w-[292px]">Pivot</span>
        <Axis l="X" v="0.5" lw="w-[18px]" fw="w-[132px]" /><div className="w-[5px]" /><Axis l="Y" v="0.5" lw="w-[17px]" fw="w-[132px]" />
      </div>
      <div className="flex items-center h-[30px] pl-[28px] mt-[12px]">
        <span className="w-[297px]">Rotation</span>
        <Axis l="X" v="0" lw="w-[22px]" fw="w-[124px]" /><div className="w-[7px]" /><Axis l="Y" v="0" lw="w-[22px]" fw="w-[124px]" /><div className="w-[7px]" /><Axis l="Z" v="0" lw="w-[22px]" fw="w-[124px]" />
      </div>
      <div className="flex items-center h-[30px] pl-[28px]">
        <span className="w-[270px]">Scale</span>
        <Link2Off className="w-[18px] h-[18px] mr-[9px] text-[#aaa]" />
        <Axis l="X" v="1" lw="w-[22px]" fw="w-[124px]" /><div className="w-[7px]" /><Axis l="Y" v="1" lw="w-[22px]" fw="w-[124px]" /><div className="w-[7px]" /><Axis l="Z" v="1" lw="w-[22px]" fw="w-[124px]" />
      </div>
    </div>

    <CompHeader title="Canvas Renderer" icon={<Eye className="w-[22px] h-[22px] text-[#b8b8b8]" strokeWidth={1.5} />} />
    <div className="h-[46px] flex items-center pl-[28px] pb-[6px] text-[18px] text-[#b8b8b8]">
      <span className="w-[296px]">Cull Transparent Mesh</span>
      <span className="w-[20px] h-[20px] bg-[#2a2a2a] border border-[#1f1f1f] rounded-[3px] flex items-center justify-center"><Check className="w-[15px] h-[15px] text-[#eee]" /></span>
    </div>

    <CompHeader title="UI Color Modifier (Script)" check icon={<span className="w-[18px] h-[22px] bg-[#ececec] rounded-[1px] flex items-center justify-center text-[16px] font-bold text-[#1d7a2e]">#</span>} />
    <div className="pt-[6px]">
      <PropRow label="Script" dim><ObjField dim text="UIColorModifier" icon={<ScriptIcon dim />} /></PropRow>
      <PropRow label="Title Color"><Swatch color="bg-black" /></PropRow>
      <PropRow label="Background Color"><Swatch color="bg-[#e0e0e0]" /></PropRow>
      <PropRow label="Section Titles Color"><Swatch color="bg-[#555555]" /></PropRow>
      <PropRow label="Section Titles Background Color"><Swatch color="bg-[#dcdcdc]" tick /></PropRow>
      <PropRow label="Section Items Labels Color"><Swatch color="bg-[#0000ff]" /></PropRow>
      <PropRow label="Section Items Background Color"><Swatch color="bg-white" bar={false} /></PropRow>
      <PropRow label="Title Text"><ObjField text="Text (TMP) (Text Mesh Pro UGUI)" icon={<span className="w-[17px] h-[20px] border border-[#1a9bd7] text-[#1a9bd7] text-[16px] leading-[18px] text-center font-['Liberation_Serif',serif] shrink-0">T</span>} /></PropRow>
      <PropRow label="Background"><ObjField text="ExpandableSectionView (Image)" icon={<ImageGlyph />} /></PropRow>
    </div>
    <div className="h-[32px] flex items-center pl-[8px] pr-[7px] text-[18px] tracking-[0.6px] font-semibold text-[#c8c8c8]">
      <Tri className="w-[13px] h-[13px] text-[#666] mr-[3px]" />Expandable Section Controllers
      <Field v="4" className="ml-auto w-[70px] h-[26px] pl-[5px] font-normal" />
    </div>
    <div className="mt-[2px] ml-[28px] mr-[7px] h-[128px] bg-[#414141] border border-[#2a2a2a] rounded-[4px] pt-[3px]">
      <ElementRow label="Element 0" text="ConnectionsExpandableSection (Expandable Section Controller)" />
      <ElementRow label="Element 1" text="SoundsAndVibration (Expandable Section Controller)" />
      <ElementRow label="Element 2" text="Display (Expandable Section Controller)" />
      <ElementRow active label="Element 3" text="Display (1) (Expandable Section Controller)" />
    </div>
    <div className="ml-[678px] w-[85px] h-[29px] border border-t-0 border-[#2a2a2a] rounded-b-[4px] bg-[#3c3c3c] flex items-center justify-around px-[6px]">
      <Plus className="w-[18px] h-[18px] text-[#ccc]" strokeWidth={2.4} />
      <Minus className="w-[14px] h-[14px] text-[#ccc]" strokeWidth={2.4} />
    </div>
    <div className="h-[17px]" />
    <CompHeader title="Image" check open={false} icon={<ImageGlyph />} />
    <div className="h-[83px] relative text-[18px] text-[#8a8a8a] border-b border-[#2a2a2a]">
      <span className="absolute left-[30px] top-[15px] w-[36px] h-[36px] bg-white" />
      <Tri dir="right" className="absolute left-[8px] top-[53px] w-[12px] h-[12px] text-[#666]" />
      <span className="absolute left-[84px] top-[8px]">Default UI Material (Material)</span>
      <span className="absolute left-[84px] top-[46px]">Shader</span>
      <div className="absolute left-[158px] top-[47px] w-[546px] h-[25px] bg-[#4a4a4a] rounded-[4px] flex items-center justify-between px-[4px] pr-[9px]">UI/Default<Tri className="w-[9px] h-[9px]" /></div>
      <span className="absolute left-[710px] top-[44px] w-[67px] h-[25px] bg-[#4a4a4a] rounded-[3px] text-center">Edit...</span>
      <span className="absolute right-[17px] top-[12px] flex items-center gap-[18px]"><FaQuestionCircle className="w-[15px] h-[15px] text-[#c8c8c8]" /><Kebab /></span>
    </div>
    <div className="h-[14px] bg-[#3c3c3c] border-b-2 border-[#232323]" />
    <div className="flex-1 flex justify-center pt-[15px]">
      <div className="w-[343px] h-[34px] bg-[#585858] border-b border-[#2a2a2a] rounded-[3px] flex items-center justify-center text-[18px] text-[#dcdcdc]">Add Component</div>
    </div>
    <div className="h-[32px] bg-[#3e3e3e] border-t-2 border-[#2d2d2d] flex items-center pl-[12px] pr-[17px] text-[18px] tracking-[0.5px] font-medium text-[#d2d2d2]">
      ExpandableSectionView
      <Tri className="ml-[3px] w-[9px] h-[9px]" />
      <div className="ml-[8px] flex-1 h-[6px] border-y border-[#666]" />
      <Kebab className="ml-[14px]" />
    </div>
  </section>
);

export default function App() {
  return (
    <div className="relative w-[2560px] h-[1514px] overflow-hidden bg-[#191919] font-['Inter',sans-serif] tracking-[0.35px] text-[#c4c4c4]">
      <div className="h-[32px] bg-white flex items-center pl-[3px] tracking-normal font-['Open_Sans',sans-serif] text-[17.2px] text-black">
        <UnityLogo />
        <span className="ml-[9px]">expandable-section-controller - ExpandableSectionScene - Android - Unity 2021.3.1f1* &lt;DX11&gt;</span>
        <div className="ml-auto flex items-center gap-[52px] pr-[27px] text-[#222]">
          <Minus className="w-[20px] h-[20px]" strokeWidth={1.4} />
          <Copy className="w-[16px] h-[16px]" strokeWidth={1.4} />
          <X className="w-[22px] h-[22px]" strokeWidth={1.4} />
        </div>
      </div>
      <div className="h-[32px] bg-white flex items-center gap-[14px] pl-[8px] tracking-normal font-['Open_Sans',sans-serif] text-[17px] text-black">
        {["File", "Edit", "Assets", "GameObject", "Component", "Window", "Help"].map((m) => (
          <span key={m}>{m}</span>
        ))}
      </div>
      <div className="h-[45px] flex items-start pt-[9px] pl-[11px] pr-[13px] text-[18px]">
        <div className="w-[88px] h-[27px] bg-[#3a3a3a] rounded-[2px] flex items-center pl-[8px] gap-[12px]">
          <FaUserCircle className="w-[19px] h-[19px] text-[#c4c4c4]" />TS<Tri className="w-[10px] h-[10px]" />
        </div>
        <div className="ml-[6px] w-[46px] h-[27px] bg-[#3a3a3a] rounded-[2px] flex items-center justify-center"><Cloud className="w-[21px] h-[21px]" fill="#c4c4c4" /></div>
        <div className="ml-[6px] w-[45px] h-[30px] bg-[#3a3a3a] rounded-[3px] flex items-center justify-center">
          <svg viewBox="0 0 20 24" className="w-[19px] h-[22px]" fill="none" stroke="#bbb" strokeWidth="2"><path d="M10 2 18 6.500v10L14 19V9l-4-2.500L6 9v6M2 17V6.500L10 2M6 15a4 4 0 0 1 8 0" /></svg>
        </div>
        <div className="ml-[1007px] flex gap-[2px]">
          <span className="w-[46px] h-[26px] bg-[#383838] flex items-center justify-center"><Tri dir="right" className="w-[14px] h-[16px] text-[#c4c4c4]" /></span>
          <span className="w-[46px] h-[26px] bg-[#383838] flex items-center justify-center gap-[3px]"><span className="w-[4px] h-[15px] bg-[#c4c4c4]" /><span className="w-[4px] h-[15px] bg-[#c4c4c4]" /></span>
          <span className="w-[46px] h-[26px] bg-[#2c2c2c] flex items-center justify-center"><Tri dir="right" className="w-[13px] h-[15px] text-[#8a8a8a]" /><span className="w-[2px] h-[14px] bg-[#8a8a8a]" /></span>
        </div>
        <div className="ml-auto flex gap-[6px]">
          <span className="w-[46px] h-[28px] bg-[#3a3a3a] rounded-[2px] flex items-center justify-center"><History className="w-[18px] h-[18px]" /></span>
          <span className="w-[46px] h-[28px] bg-[#3a3a3a] rounded-[2px] flex items-center justify-center"><Search className="w-[18px] h-[18px]" /></span>
          <span className="w-[118px] h-[28px] bg-[#3a3a3a] rounded-[2px] flex items-center justify-between pl-[6px] pr-[6px]">Layers<Tri className="w-[10px] h-[10px]" /></span>
          <span className="w-[118px] h-[28px] bg-[#3a3a3a] rounded-[2px] flex items-center justify-between pl-[6px] pr-[6px]">Layout<Tri className="w-[10px] h-[10px]" /></span>
        </div>
      </div>

      <div className="flex">
        <div className="w-[1772px] shrink-0 flex flex-col">
          <div className="h-[1113px] flex gap-[2px] overflow-hidden">
            <Hierarchy />
            <Scene />
            <Simulator />
          </div>
          <Project />
        </div>
        <Inspector />
      </div>

      {/* annotations pasted over the capture */}
      <div className="absolute left-[116px] top-[467px] w-[393px] h-[201px] border-[4px] border-[#ed1c24]" />
      <div className="absolute left-[1793px] top-[1093px] w-[780px] h-[39px] border-[4px] border-[#ed1c24]" />
      <div className="absolute left-[907px] top-[1073px] w-[870px] h-[94px] bg-white flex items-center pl-[1px] tracking-normal font-['Open_Sans',sans-serif] font-semibold text-[62.700px] whitespace-nowrap text-[#ed1c24]">
        Add the new section here -&gt;
      </div>
    </div>
  );
}
